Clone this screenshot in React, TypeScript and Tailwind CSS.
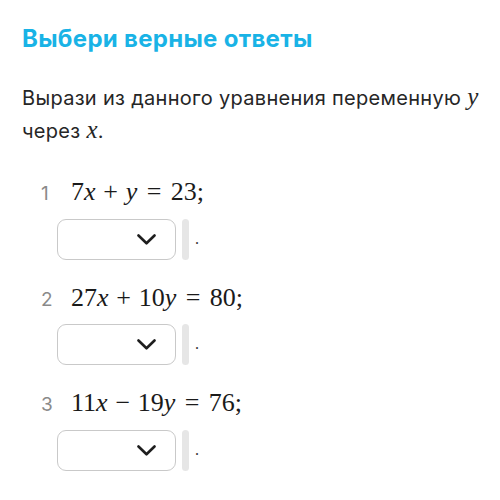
import type { ReactNode } from 'react'

type Task = {
  n: number
  eq: ReactNode
}

const V = ({ children }: { children: ReactNode }) => <i className="italic">{children}</i>

// binary operator / relation with TeX-like spacing
const Op = ({ children }: { children: ReactNode }) => <span className="mx-[0.3em]">{children}</span>
const Rel = ({ children }: { children: ReactNode }) => <span className="mx-[0.36em]">{children}</span>

const tasks: Task[] = [
  {
    n: 1,
    eq: (
      <>
        7<V>x</V>
        <Op>+</Op>
        <V>y</V>
        <Rel>=</Rel>23;
      </>
    ),
  },
  {
    n: 2,
    eq: (
      <>
        27<V>x</V>
        <Op>+</Op>10<V>y</V>
        <Rel>=</Rel>80;
      </>
    ),
  },
  {
    n: 3,
    eq: (
      <>
        11<V>x</V>
        <Op>−</Op>19<V>y</V>
        <Rel>=</Rel>76;
      </>
    ),
  },
]

function AnswerSelect() {
  return (
    <div className="ml-[16px] mt-[10px] flex items-center">
      <button className="flex h-[41px] w-[119px] items-center justify-end rounded-[9px] border border-[#c9c9c9] bg-white pr-[19px]">
        <svg width="19" height="11" viewBox="0 0 19 11" fill="none">
          <path d="M1.5 1.5 L9.5 9.3 L17.5 1.5" stroke="#1e1e1e" strokeWidth="2.6" strokeLinecap="round" strokeLinejoin="round" />
        </svg>
      </button>
      {/* answer slot */}
      <div className="ml-[6px] h-[41px] w-[7px] rounded-[4px] bg-[#e6e6e6]" />
      <span className="mb-[1px] ml-[6px] font-['Liberation_Serif',serif] text-[16px] leading-[16px] text-[#333]">.</span>
    </div>
  )
}

export default function App() {
  return (
    <div className="h-[500px] w-[500px] overflow-hidden bg-white pl-[22px] pr-[8px] pt-[25px] font-['Inter',sans-serif]">
      <h2 className="text-[24px] font-bold leading-[28px] tracking-[0.3px] text-[#19b3e6]">Выбери верные ответы</h2>

      <p className="mt-[29px] text-[20px] leading-[33px] tracking-[0.3px] text-[#262626]">
        <span className="whitespace-nowrap">
          Вырази из данного уравнения переменную{' '}
          <span className="font-['Liberation_Serif',serif] text-[25px] italic leading-none">y</span>
        </span>
        <br />
        через <span className="font-['Liberation_Serif',serif] text-[25px] italic leading-none">x</span>.
      </p>

      <ol className="mt-[28px] pl-[19px]">
        {tasks.map((t) => (
          <li key={t.n} className="mb-[22px]">
            <div className="flex items-baseline">
              <span className="w-[30px] text-[19px] text-[#8a8a8a]">{t.n}</span>
              <span className="font-['Liberation_Serif',serif] text-[26px] leading-[32px] text-[#1a1a1a]">{t.eq}</span>
            </div>
            <AnswerSelect />
          </li>
        ))}
      </ol>
    </div>
  )
}
